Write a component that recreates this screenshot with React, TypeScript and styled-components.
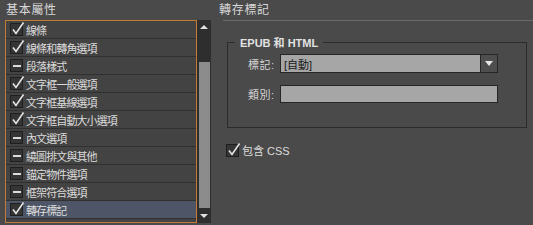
import styled, { createGlobalStyle } from "styled-components";

const GlobalStyle = createGlobalStyle`
  html, body {
    margin: 0;
    padding: 0;
    background: #4a4a4a;
  }
  body {
    font-family: "Liberation Sans", "Noto Sans CJK TC", sans-serif;
    color: #d6d6d6;
    font-size: 12px;
  }
`;

type Item = { label: string; state: "checked" | "mixed"; selected?: boolean };

const items: Item[] = [
  { label: "線條", state: "checked" },
  { label: "線條和轉角選項", state: "checked" },
  { label: "段落樣式", state: "mixed" },
  { label: "文字框一般選項", state: "checked" },
  { label: "文字框基線選項", state: "checked" },
  { label: "文字框自動大小選項", state: "checked" },
  { label: "內文選項", state: "mixed" },
  { label: "繞圖排文與其他", state: "mixed" },
  { label: "錨定物件選項", state: "mixed" },
  { label: "框架符合選項", state: "mixed" },
  { label: "轉存標記", state: "checked", selected: true },
];

const Page = styled.div`
  width: 533px;
  height: 225px;
  display: flex;
  overflow: hidden;
`;

const LeftPanel = styled.div`
  width: 213px;
  padding: 3px 0 0 5px;
  box-sizing: border-box;
  display: flex;
  flex-direction: column;
`;

const PanelTitle = styled.div`
  height: 17px;
  line-height: 15px;
  font-size: 12px;
  letter-spacing: 0.7px;
  padding-left: 1px;
  color: #d8d8d8;
`;

const ListWrap = styled.div`
  display: flex;
  height: 203px;
`;

const List = styled.div`
  width: 192px;
  box-sizing: border-box;
  border: 1px solid #c27a34;
  background: #434343;
  overflow: hidden;
`;

const Row = styled.div<{ $selected?: boolean }>`
  height: 18px;
  box-sizing: border-box;
  border-bottom: 1px solid #303030;
  display: flex;
  align-items: center;
  gap: 3px;
  padding-left: 4px;
  background: ${(p) => (p.$selected ? "#4d5566" : "#434343")};
  font-size: 11px;
  letter-spacing: -0.9px;
  color: #dcdcdc;
`;

const Box = styled.span`
  width: 13px;
  height: 13px;
  box-sizing: border-box;
  border: 1px solid #1f1f1f;
  background: #353535;
  position: relative;
  flex: none;
  display: flex;
  align-items: center;
  justify-content: center;
`;

const Dash = styled.span`
  width: 8px;
  height: 2px;
  background: #dadada;
`;

const Check = () => (
  <svg
    width="14"
    height="15"
    viewBox="0 0 14 15"
    style={{ position: "absolute", left: 0, top: -3 }}
  >
    <path d="M2 8.5 L5 12.5 L12.5 1.5" fill="none" stroke="#e6e6e6" strokeWidth="1.6" />
  </svg>
);

const CheckBox = ({ state }: { state: "checked" | "mixed" }) => (
  <Box>{state === "checked" ? <Check /> : <Dash />}</Box>
);

const Scrollbar = styled.div`
  width: 14px;
  background: #2e2e2e;
  display: flex;
  flex-direction: column;
  align-items: center;
`;

const Arrow = styled.div<{ $down?: boolean }>`
  height: 14px;
  width: 14px;
  flex: none;
  display: flex;
  align-items: center;
  justify-content: center;
  &::before {
    content: "";
    border-left: 4px solid transparent;
    border-right: 4px solid transparent;
    ${(p) =>
      p.$down
        ? "border-top: 4px solid #e0e0e0;"
        : "border-bottom: 4px solid #e0e0e0;"}
  }
`;

const Track = styled.div`
  flex: 1;
  width: 11px;
  display: flex;
  flex-direction: column;
  padding-top: 28px;
  padding-bottom: 1px;
  box-sizing: border-box;
`;

const Thumb = styled.div`
  flex: 1;
  background: #8c8c8c;
`;

const RightPanel = styled.div`
  flex: 1;
  padding: 3px 0 0 6px;
  display: flex;
  flex-direction: column;
`;

const RightTitle = styled.div`
  height: 17px;
  line-height: 15px;
  font-size: 12px;
  letter-spacing: 0.7px;
  color: #d8d8d8;
`;

const Rule = styled.div`
  height: 1px;
  background: #6a6a6a;
  margin-left: 4px;
`;

const Group = styled.fieldset`
  margin: 13px 6px 0 8px;
  padding: 4px 0 24px 20px;
  border: 1px solid #2c2c2c;
  display: flex;
  flex-direction: column;
  gap: 12px;
`;

const Legend = styled.legend`
  padding: 0 5px;
  margin-left: -13px;
  font-size: 11px;
  font-weight: bold;
  color: #e2e2e2;
`;

const FieldRow = styled.div`
  display: flex;
  align-items: center;
`;

const FieldLabel = styled.span`
  width: 32px;
  font-size: 11px;
  letter-spacing: 0.5px;
  color: #d4d4d4;
`;

const Select = styled.div`
  width: 218px;
  height: 19px;
  box-sizing: border-box;
  border: 1px solid #262626;
  background: #a6a6a6;
  display: flex;
  align-items: center;
  color: #1a1a1a;
  font-size: 11px;
`;

const SelectText = styled.span`
  flex: 1;
  padding-left: 3px;
`;

const DropButton = styled.span`
  width: 16px;
  height: 100%;
  background: #4e4e4e;
  border-left: 1px solid #262626;
  display: flex;
  align-items: center;
  justify-content: center;
  &::before {
    content: "";
    border-left: 4px solid transparent;
    border-right: 4px solid transparent;
    border-top: 5px solid #e6e6e6;
  }
`;

const TextInput = styled.div`
  width: 218px;
  height: 18px;
  box-sizing: border-box;
  border: 1px solid #262626;
  background: #a6a6a6;
`;

const CssRow = styled.div`
  display: flex;
  align-items: center;
  gap: 3px;
  margin: 14px 0 0 7px;
  font-size: 11px;
  color: #dcdcdc;
`;

export default function App() {
  return (
    <>
      <GlobalStyle />
      <Page>
        <LeftPanel>
          <PanelTitle>基本屬性</PanelTitle>
          <ListWrap>
            <List>
              {items.map((it) => (
                <Row key={it.label} $selected={it.selected}>
                  <CheckBox state={it.state} />
                  <span>{it.label}</span>
                </Row>
              ))}
            </List>
            <Scrollbar>
              <Arrow />
              <Track>
                <Thumb />
              </Track>
              <Arrow $down />
            </Scrollbar>
          </ListWrap>
        </LeftPanel>
        <RightPanel>
          <RightTitle>轉存標記</RightTitle>
          <Rule />
          <Group>
            <Legend>EPUB 和 HTML</Legend>
            <FieldRow>
              <FieldLabel>標記:</FieldLabel>
              <Select>
                <SelectText>[自動]</SelectText>
                <DropButton />
              </Select>
            </FieldRow>
            <FieldRow>
              <FieldLabel>類別:</FieldLabel>
              <TextInput />
            </FieldRow>
          </Group>
          <CssRow>
            <CheckBox state="checked" />
            <span>包含 CSS</span>
          </CssRow>
        </RightPanel>
      </Page>
    </>
  );
}
